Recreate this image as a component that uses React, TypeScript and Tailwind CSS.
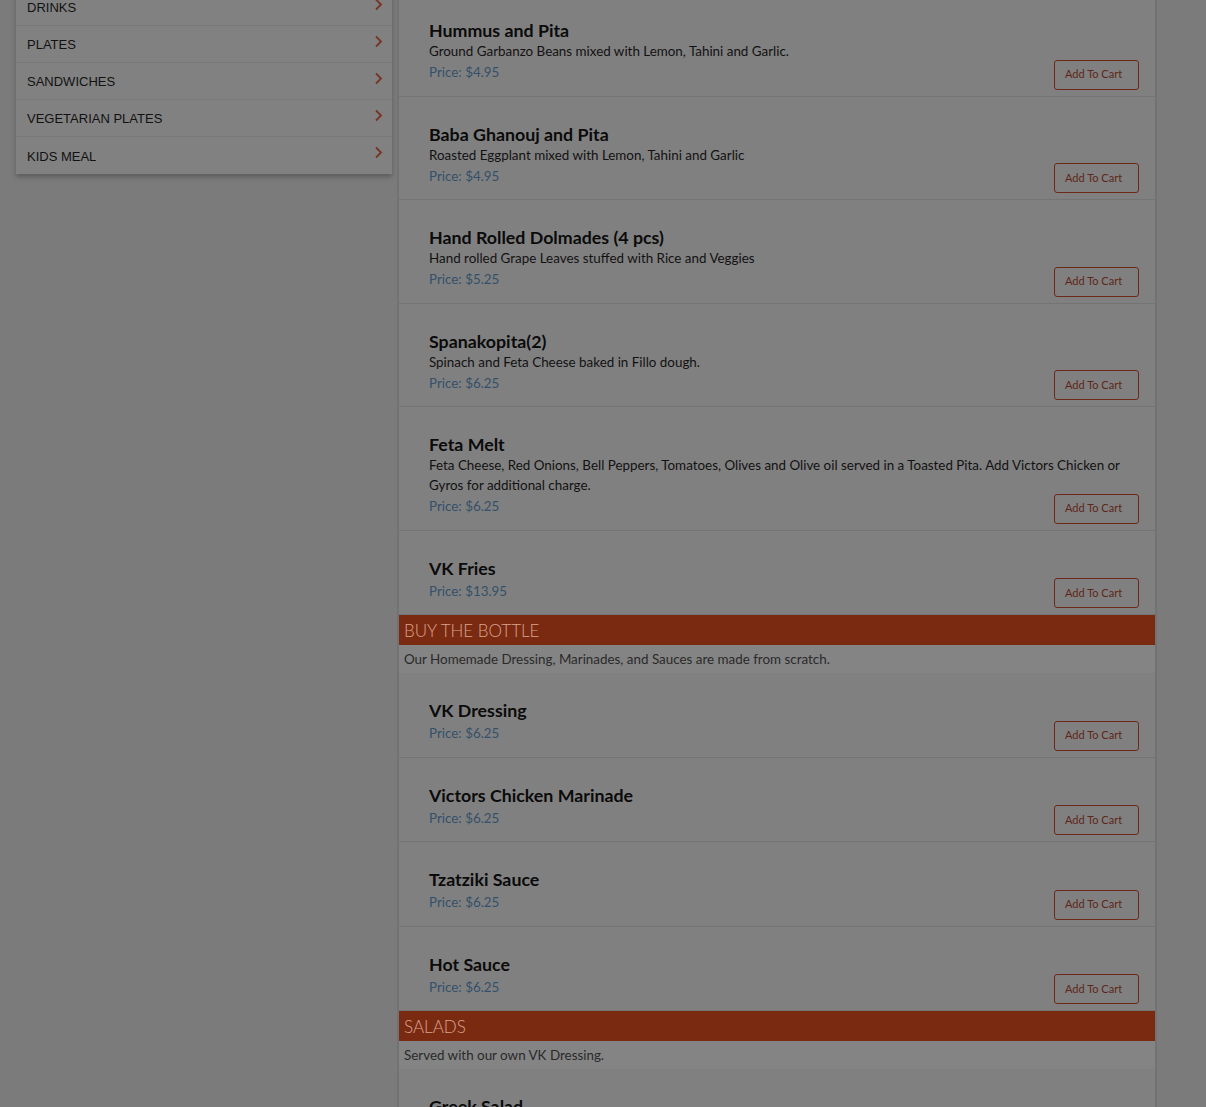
import React from "react";

type Item = { name: string; desc?: string; price: string };
type Section = { title?: string; note?: string; items: Item[] };

const categories = ["DRINKS", "PLATES", "SANDWICHES", "VEGETARIAN PLATES", "KIDS MEAL"];

const sections: Section[] = [
  {
    items: [
      { name: "Hummus and Pita", desc: "Ground Garbanzo Beans mixed with Lemon, Tahini and Garlic.", price: "$4.95" },
      { name: "Baba Ghanouj and Pita", desc: "Roasted Eggplant mixed with Lemon, Tahini and Garlic", price: "$4.95" },
      { name: "Hand Rolled Dolmades (4 pcs)", desc: "Hand rolled Grape Leaves stuffed with Rice and Veggies", price: "$5.25" },
      { name: "Spanakopita(2)", desc: "Spinach and Feta Cheese baked in Fillo dough.", price: "$6.25" },
      {
        name: "Feta Melt",
        desc: "Feta Cheese, Red Onions, Bell Peppers, Tomatoes, Olives and Olive oil served in a Toasted Pita. Add Victors Chicken or Gyros for additional charge.",
        price: "$6.25",
      },
      { name: "VK Fries", price: "$13.95" },
    ],
  },
  {
    title: "BUY THE BOTTLE",
    note: "Our Homemade Dressing, Marinades, and Sauces are made from scratch.",
    items: [
      { name: "VK Dressing", price: "$6.25" },
      { name: "Victors Chicken Marinade", price: "$6.25" },
      { name: "Tzatziki Sauce", price: "$6.25" },
      { name: "Hot Sauce", price: "$6.25" },
    ],
  },
  {
    title: "SALADS",
    note: "Served with our own VK Dressing.",
    items: [{ name: "Greek Salad", desc: "Romaine Lettuce, Tomatoes, Cucumbers, Red Onions, Olives and Feta Cheese.", price: "$8.95" }],
  },
];

function Chevron() {
  return (
    <svg width="9" height="13" viewBox="0 0 9 13" className="mt-[-8px]">
      <path d="M2 1.5 L7 6.5 L2 11.5" fill="none" stroke="#763424" strokeWidth="1.8" />
    </svg>
  );
}

function MenuRow({ item }: { item: Item }) {
  return (
    <div className="border-b border-[#747474] pl-[30px] pr-[16px] pt-[26px] pb-[12.5px]">
      <h3 className="text-[17.8px] leading-[22px] font-bold text-[#0b0b0b]">{item.name}</h3>
      {item.desc && <p className="text-[13.4px] leading-[20px] text-[#121212]">{item.desc}</p>}
      <div className={`flex h-[22px] items-start justify-between ${item.desc ? "" : "mt-[1px]"}`}>
        <p className="text-[13.4px] leading-[22px] text-[#34506a]">Price: {item.price}</p>
        <button className="mt-[-1.5px] w-[85px] h-[30px] shrink-0 rounded-[3px] border border-[#6c2818] pl-[10px] text-left text-[11px] text-[#5e2719]">
          Add To Cart
        </button>
      </div>
    </div>
  );
}

export default function App() {
  return (
    <div className="min-h-screen bg-[#7b7b7b] overflow-hidden" style={{ fontFamily: "Lato, sans-serif" }}>
      <div className="flex items-start pl-[16px] gap-[5px] mt-[-11px]">
        <div className="w-[376px] bg-[#818181] shadow-[0_3px_5px_rgba(0,0,0,0.25)]">
          {categories.map((c, i) => (
            <div
              key={c}
              className={`flex items-center justify-between h-[37px] pl-[11px] pr-[9px] pt-[2px] ${i < categories.length - 1 ? "border-b border-[#787878]" : ""}`}
            >
              <span className="text-[13px] text-[#121212]" style={{ fontFamily: "'Liberation Sans', Arial, sans-serif" }}>
                {c}
              </span>
              <Chevron />
            </div>
          ))}
        </div>
        <div className="w-[760px] bg-[#808080] border-x-2 border-[#727272] mt-[4px]">
          {sections.map((s, i) => (
            <div key={i}>
              {s.title && (
                <>
                  <div className="h-[30px] bg-[#7b2a12] pl-[5px] pt-[4px] text-[17px] leading-[24px] font-light text-[#d9a28c]">
                    {s.title}
                  </div>
                  <div className="h-[28px] bg-[#848484] pl-[5px] text-[13.4px] leading-[28px] text-[#2a2a2a]">{s.note}</div>
                </>
              )}
              {s.items.map((it) => (
                <MenuRow key={it.name} item={it} />
              ))}
            </div>
          ))}
        </div>
      </div>
    </div>
  );
}
